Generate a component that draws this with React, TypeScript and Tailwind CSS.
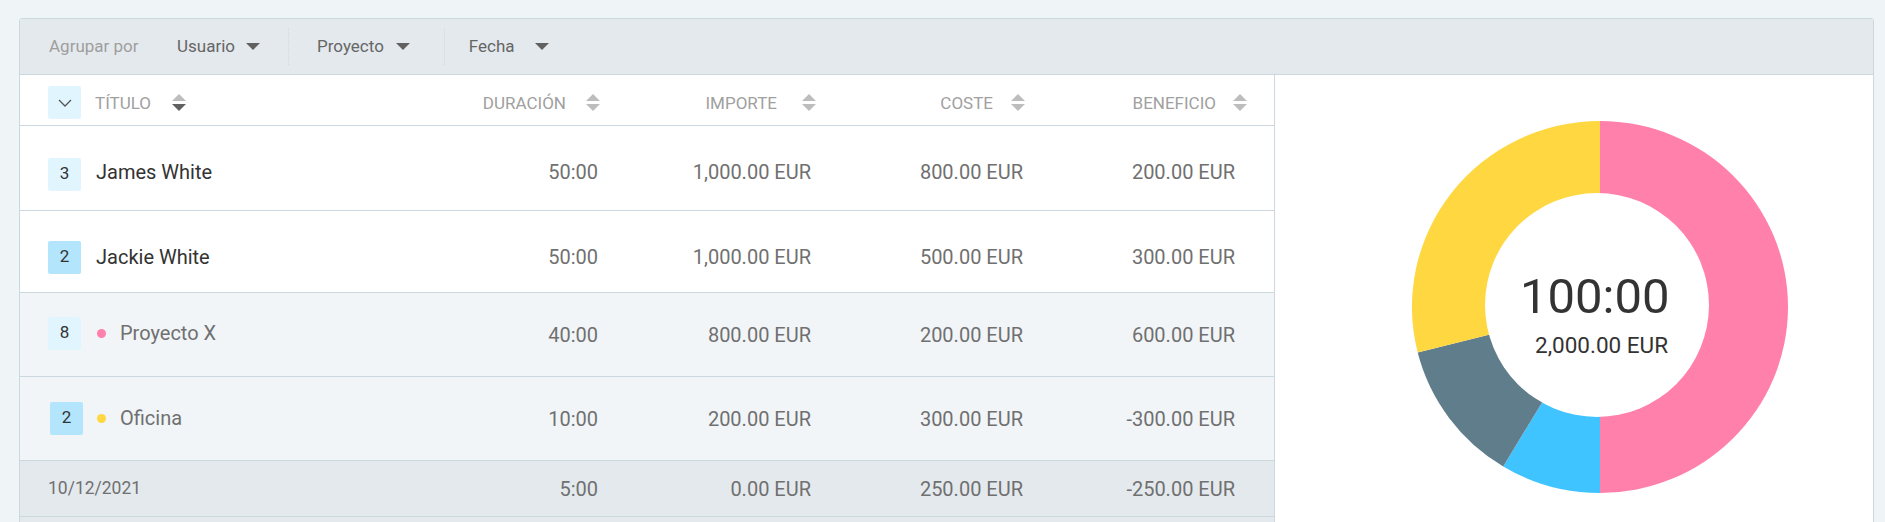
import React from 'react';

interface Row {
  id: string;
  name: string;
  count?: number;
  dot?: 'pink' | 'yellow';
  values: string[];
}

const SortIcon = ({ active = false, className = '' }: { active?: boolean; className?: string }) => (
  <svg width="14" height="17" viewBox="0 0 14 17" className={className}>
    <path d="M7 0 L14 7 L0 7 Z" fill="#bdbdbd" />
    <path d="M0 10 L14 10 L7 17 Z" fill={active ? '#616161' : '#bdbdbd'} />
  </svg>
);

const Caret = ({ className = '' }: { className?: string }) => (
  <svg width="14" height="7" viewBox="0 0 14 7" className={className}>
    <path d="M0 0 L14 0 L7 7 Z" fill="#616161" />
  </svg>
);

const Donut = () => (
  <svg width="376" height="372" viewBox="0 0 376 372">
    <path d="M188 186 L188 0 A188 186 0 0 1 188 372 Z" fill="#ff80ab" />
    <path d="M188 186 L188 372 A188 186 0 0 1 91.2 345.4 Z" fill="#40c4ff" />
    <path d="M188 186 L91.2 345.4 A188 186 0 0 1 5.7 231.6 Z" fill="#607d8b" />
    <path d="M188 186 L5.7 231.6 A188 186 0 0 1 188 0 Z" fill="#ffd740" />
    <circle cx="185" cy="184" r="112" fill="#ffffff" />
  </svg>
);

const CountBadge = ({ count, dark, className = '' }: { count: number; dark?: boolean; className?: string }) => (
  <div
    className={`flex h-[33px] w-[33px] shrink-0 items-center justify-center rounded-[2px] text-[17px] text-[#333333] ${
      dark ? 'bg-[#b3e5fc]' : 'bg-[#e1f5fe]'
    } ${className}`}
  >
    {count}
  </div>
);

const userRows: Row[] = [
  { id: 'james', name: 'James White', count: 3, values: ['50:00', '1,000.00 EUR', '800.00 EUR', '200.00 EUR'] },
  { id: 'jackie', name: 'Jackie White', count: 2, values: ['50:00', '1,000.00 EUR', '500.00 EUR', '300.00 EUR'] },
];

const projectRows: Row[] = [
  { id: 'x', name: 'Proyecto X', count: 8, dot: 'pink', values: ['40:00', '800.00 EUR', '200.00 EUR', '600.00 EUR'] },
  { id: 'oficina', name: 'Oficina', count: 2, dot: 'yellow', values: ['10:00', '200.00 EUR', '300.00 EUR', '-300.00 EUR'] },
];

const Values = ({ values }: { values: string[] }) => (
  <>
    {values.map((value, i) => (
      <div key={i} className="text-right text-[20px] text-[#707070]">
        {value}
      </div>
    ))}
  </>
);

export default function App() {
  return (
    <div className="h-[522px] overflow-hidden bg-[#eff4f7] pl-[19px] pt-[18px] font-['Roboto',sans-serif]">
      <div className="w-[1855px] rounded-t-[3px] border border-[#ccd8e0]">
        {/* group by toolbar */}
        <div className="flex h-[56px] items-center border-b border-[#ccd8e0] bg-[#e4e9ed] text-[17px]">
          <span className="ml-[29px] w-[128px] text-[#9e9e9e]">Agrupar por</span>
          <span className="text-[#666666]">Usuario</span>
          <Caret className="ml-[11px]" />
          <div className="ml-[28px] h-[37px] border-l border-dotted border-[#d3d9de]" />
          <span className="ml-[28px] text-[#666666]">Proyecto</span>
          <Caret className="ml-[12px]" />
          <div className="ml-[34px] h-[37px] border-l border-dotted border-[#d3d9de]" />
          <span className="ml-[24px] text-[#666666]">Fecha</span>
          <Caret className="ml-[20px]" />
        </div>

        <div className="flex">
          <div className="w-[1255px] shrink-0 border-r border-[#ccd8e0]">
            {/* column headers */}
            <div className="grid h-[51px] grid-cols-[360px_220px_216px_209px_222px] items-center border-b border-[#ccd8e0] bg-white pt-[5px] text-[17px] text-[#a0a0a0]">
              <div className="flex items-center pl-[28px]">
                <div className="flex h-[33px] w-[33px] items-center justify-center rounded-[2px] bg-[#e1f5fe]">
                  <svg width="14" height="8" viewBox="0 0 14 8">
                    <path d="M1 1 L7 7 L13 1" fill="none" stroke="#555555" strokeWidth="1.3" />
                  </svg>
                </div>
                <span className="ml-[14px] pt-[2px]">TÍTULO</span>
                <SortIcon active className="ml-[21px]" />
              </div>
              <div className="flex items-center justify-end">
                <span className="pt-[2px]">DURACIÓN</span>
                <SortIcon className="ml-[20px]" />
              </div>
              <div className="flex items-center justify-end">
                <span className="pt-[2px]">IMPORTE</span>
                <SortIcon className="ml-[25px]" />
              </div>
              <div className="flex items-center justify-end">
                <span className="pt-[2px]">COSTE</span>
                <SortIcon className="ml-[18px]" />
              </div>
              <div className="flex items-center justify-end">
                <span className="pt-[2px]">BENEFICIO</span>
                <SortIcon className="ml-[17px]" />
              </div>
            </div>

            {userRows.map((row, i) => (
              <div
                key={row.id}
                className={`grid grid-cols-[360px_218px_213px_212px_212px] items-center border-b border-[#ccd8e0] bg-white ${
                  i === 0 ? 'h-[85px] pt-[7px]' : 'h-[82px] pt-[11px]'
                }`}
              >
                <div className="flex items-center pl-[28px]">
                  <CountBadge count={row.count ?? 0} dark={i === 1} className={i === 0 ? 'mt-[5px]' : ''} />
                  <span className="ml-[15px] text-[20px] text-[#333333]">{row.name}</span>
                </div>
                <Values values={row.values} />
              </div>
            ))}

            {projectRows.map((row, i) => (
              <div
                key={row.id}
                className="grid h-[84px] grid-cols-[360px_218px_213px_212px_212px] items-center border-b border-[#ccd8e0] bg-[#f1f5f8]"
              >
                <div className={`flex items-center ${i === 0 ? 'pb-[3px] pl-[28px]' : 'pb-[1px] pl-[30px]'}`}>
                  <CountBadge count={row.count ?? 0} dark={i === 1} />
                  <span
                    className={`h-[9px] w-[9px] rounded-full ${i === 0 ? 'ml-[16px]' : 'ml-[14px]'} ${
                      row.dot === 'pink' ? 'bg-[#ff80ab]' : 'bg-[#ffd740]'
                    }`}
                  />
                  <span className="ml-[14px] text-[20px] text-[#707070]">{row.name}</span>
                </div>
                <Values values={row.values} />
              </div>
            ))}

            <div className="grid h-[56px] grid-cols-[360px_218px_213px_212px_212px] items-center border-b border-[#ccd8e0] bg-[#e4e9ed]">
              <div className="pb-[1px] pl-[28px] text-[17.5px] text-[#707070]">10/12/2021</div>
              <Values values={['5:00', '0.00 EUR', '250.00 EUR', '-250.00 EUR']} />
            </div>
            <div className="h-[20px] bg-[#e4e9ed]" />
          </div>

          <div className="flex-1 bg-white pl-[137px] pt-[46px]">
            <div className="relative h-[372px] w-[376px]">
              <Donut />
              {/* totals in the middle of the ring */}
              <div className="absolute left-[108px] top-[146px] w-[148px] text-center text-[49px] leading-[60px] text-[#333333]">
                100:00
              </div>
              <div className="absolute left-[123px] top-[211px] whitespace-nowrap text-[22.5px] leading-[26px] text-[#333333]">
                2,000.00 EUR
              </div>
            </div>
          </div>
        </div>
      </div>
    </div>
  );
}
